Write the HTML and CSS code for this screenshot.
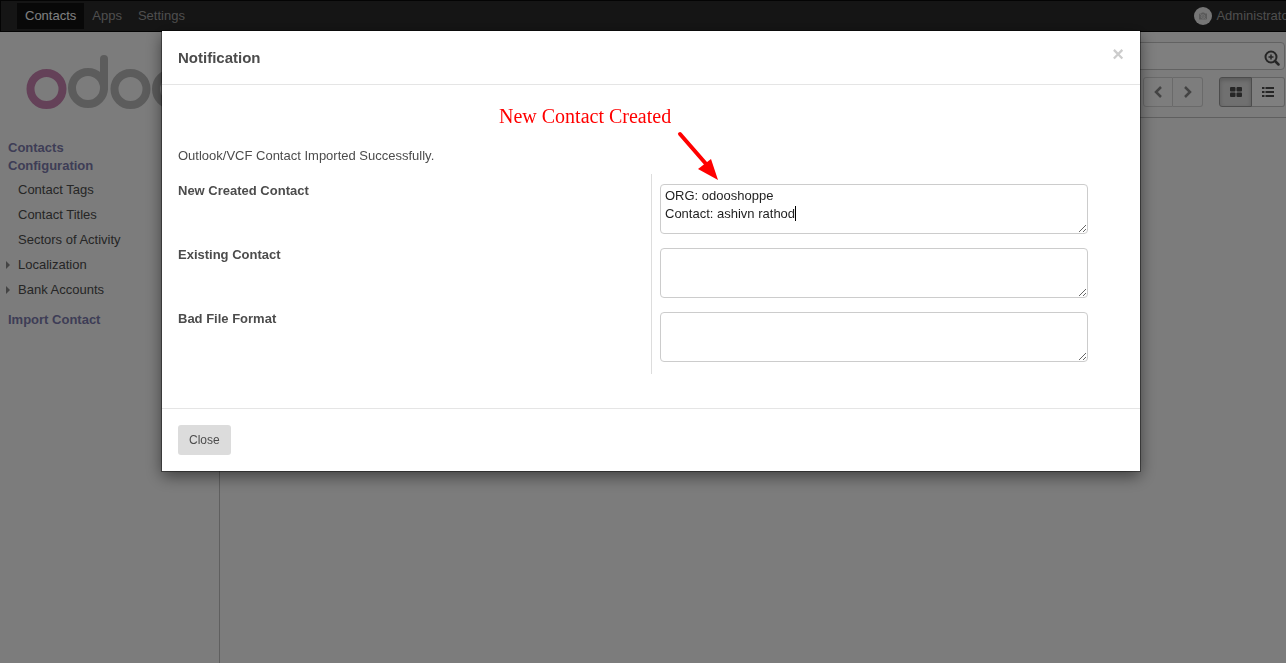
FILE: index.html
```
<!DOCTYPE html>
<html lang="en">
<head>
<meta charset="utf-8">
<title>Contacts - Odoo</title>
<link rel="stylesheet" href="styles.css">
</head>
<body>
<div class="app">
  <nav class="navbar">
    <a class="nav-item active" href="#">Contacts</a>
    <a class="nav-item" href="#">Apps</a>
    <a class="nav-item" href="#">Settings</a>
    <a class="user" href="#">
      <svg class="avatar" viewBox="0 0 18 18"><circle cx="9" cy="9" r="9" fill="#ececec"/><path d="M5 6.500h2l1-1h2l1 1h2v6H5z" fill="#b4b4b4"/><circle cx="9" cy="9.500" r="1.800" fill="none" stroke="#e4e4e4"/><path d="M5 6l8 7" stroke="#ddd"/></svg>
      <span>Administrator</span>
    </a>
  </nav>
  <div class="body">
    <aside class="sidebar">
      <svg class="logo" viewBox="0 0 188 60">
        <g fill="none" stroke-width="8">
          <circle cx="20.500" cy="36" r="16" stroke="#c983b1"/>
          <g stroke="#b8b8b8"><circle cx="62" cy="35" r="16"/><path d="M78 35V6" stroke-linecap="round"/><circle cx="104.500" cy="36" r="16"/><circle cx="146" cy="36" r="16"/></g>
        </g>
      </svg>
      <h2 class="section">Contacts</h2>
      <h2 class="section">Configuration</h2>
      <ul class="menu">
        <li><a href="#">Contact Tags</a></li>
        <li><a href="#">Contact Titles</a></li>
        <li><a href="#">Sectors of Activity</a></li>
        <li class="parent"><a href="#">Localization</a></li>
        <li class="parent"><a href="#">Bank Accounts</a></li>
      </ul>
      <h2 class="section">Import Contact</h2>
    </aside>
    <main class="content">
      <div class="control-panel">
        <div class="search">
          <input type="text" aria-label="Search">
          <svg class="search-icon" viewBox="0 0 16 16" fill="none" stroke="#4c4c4c"><circle cx="7" cy="7" r="5.500" stroke-width="2"/><path d="M11 11l3.500 3.500" stroke-width="2.500" stroke-linecap="round"/><path d="M4.500 7h5M7 4.500v5" stroke-width="1.500"/></svg>
        </div>
        <div class="buttons">
          <div class="group">
            <button class="pager" aria-label="Previous"><svg viewBox="0 0 12 12"><path d="M9 1L4 6l5 5" fill="none" stroke="#888" stroke-width="2.500"/></svg></button>
            <button class="pager" aria-label="Next"><svg viewBox="0 0 12 12"><path d="M3 1l5 5-5 5" fill="none" stroke="#888" stroke-width="2.500"/></svg></button>
          </div>
          <div class="group">
            <button class="view on" aria-label="Kanban view"><svg viewBox="0 0 12 12" fill="#4c4c4c"><rect y="1" width="5.500" height="4.500" rx="1"/><rect x="6.500" y="1" width="5.500" height="4.500" rx="1"/><rect y="6.500" width="5.500" height="4.500" rx="1"/><rect x="6.500" y="6.500" width="5.500" height="4.500" rx="1"/></svg></button>
            <button class="view" aria-label="List view"><svg viewBox="0 0 12 12" fill="#4c4c4c"><path d="M0 1h2.500v2H0zM3.500 1H12v2H3.500zM0 5h2.500v2H0zM3.500 5H12v2H3.500zM0 9h2.500v2H0zM3.500 9H12v2H3.500z"/></svg></button>
          </div>
        </div>
      </div>
    </main>
  </div>
</div>
<div class="backdrop">
  <section class="modal" role="dialog" aria-labelledby="title">
    <header class="modal-header">
      <h1 id="title">Notification</h1>
      <button class="dismiss" aria-label="Dismiss">×</button>
    </header>
    <div class="modal-body">
      <div class="note">New Contact Created
        <svg class="arrow" viewBox="0 0 44 52"><path d="M4 5l27 31" stroke="#f00" stroke-width="4" stroke-linecap="round"/><path d="M42 51L22 40l13-10z" fill="#f00"/></svg>
      </div>
      <p class="message">Outlook/VCF Contact Imported Successfully.</p>
      <div class="form">
        <div class="row">
          <label for="created">New Created Contact</label>
          <div class="field"><textarea id="created">ORG: odooshoppe
Contact: ashivn rathod</textarea><span class="caret"></span></div>
        </div>
        <div class="row">
          <label for="existing">Existing Contact</label>
          <div class="field"><textarea id="existing"></textarea></div>
        </div>
        <div class="row">
          <label for="bad">Bad File Format</label>
          <div class="field"><textarea id="bad"></textarea></div>
        </div>
      </div>
    </div>
    <footer class="modal-footer"><button class="close">Close</button></footer>
  </section>
</div>
</body>
</html>
```
FILE: styles.css
```
* { box-sizing: border-box; }
body {
  margin: 0;
  overflow: hidden;
  font: 13px/18px "Liberation Sans", Arial, sans-serif;
  color: #4c4c4c;
}
a { color: inherit; text-decoration: none; }
button { font: inherit; color: inherit; cursor: pointer; }

.app { display: flex; flex-direction: column; min-height: 100vh; }
.navbar {
  display: flex;
  align-items: center;
  height: 32px;
  padding-left: 16px;
  overflow: hidden;
  background: #2b2b2b;
  border: 1px solid #080808;
  border-right: 0;
  color: #9d9d9d;
}
.nav-item { padding: 4px 8px; }
.nav-item.active { background: #101010; color: #fff; }
.user {
  display: flex;
  align-items: center;
  gap: 4px;
  margin-left: auto;
  margin-right: -7px;
}
.avatar { width: 18px; height: 18px; }

.body { display: flex; flex: 1; }
.sidebar {
  width: 220px;
  background: #f8f8f8;
  border-right: 1px solid #bfbfbf;
}
.logo { display: block; width: 188px; height: 60px; margin: 21px 0 26px 26px; }
.section {
  margin: 0;
  padding-left: 8px;
  font-size: 13px;
  line-height: 18px;
  color: #7c7bad;
}
.menu { margin: 2px 0 9px; padding: 0; list-style: none; }
.menu li {
  display: flex;
  align-items: center;
  height: 25px;
  padding-left: 18px;
}
.menu .parent { gap: 8px; padding-left: 6px; }
.parent::before {
  content: "";
  border: 4px solid transparent;
  border-left-color: #888;
  border-right: 0;
}

.content { flex: 1; background: #f8f8f8; }
.control-panel {
  display: flex;
  flex-direction: column;
  align-items: flex-end;
  gap: 7px;
  padding: 10px 1px 10px;
  border-bottom: 1px solid #bfbfbf;
}
.search {
  display: flex;
  align-items: center;
  width: 50%;
  height: 28px;
  padding-right: 4px;
  border: 1px solid #c4c4c4;
  border-radius: 4px;
  background: #fff;
}
.search input { flex: 1; border: 0; background: none; }
.search-icon { width: 16px; height: 16px; margin-top: 3px; }
.buttons { display: flex; gap: 16px; }
.group { display: flex; }
.group button {
  display: flex;
  align-items: center;
  justify-content: center;
  height: 30px;
  padding: 0 0 1px;
  background: #fff;
  border: 1px solid #c4c4c4;
}
.group button:first-child { border-radius: 3px 0 0 3px; }
.group button:last-child { border-radius: 0 3px 3px 0; border-left: 0; }
.group svg { width: 12px; height: 12px; }
.group .pager { width: 30px; background: #fafafa; border-color: #d4d4d4; }
.view { width: 33px; }
.group .on { background: #e0e0e0; border-color: #999; box-shadow: inset 0 2px 4px rgba(0, 0, 0, .2); }

.backdrop {
  position: fixed;
  inset: 0;
  padding: 31px 146px 0 162px;
  background: rgba(0, 0, 0, .5);
}
.modal {
  background: #fff;
  box-shadow: 0 0 0 1px rgba(0, 0, 0, .4), 0 5px 15px rgba(0, 0, 0, .5);
}
.modal-header {
  display: flex;
  align-items: center;
  justify-content: space-between;
  height: 54px;
  padding: 0 16px;
  border-bottom: 1px solid #e5e5e5;
}
.modal-header h1 { margin: 0; font-size: 15px; line-height: 20px; }
.dismiss {
  padding: 0 0 8px;
  background: none;
  border: 0;
  font-size: 20px;
  line-height: 20px;
  font-weight: bold;
  color: #ccc;
}
.modal-body { padding: 19px 16px 34px; }
.note {
  position: relative;
  width: max-content;
  margin-left: 321px;
  font: 20px/24px "Liberation Serif", "Times New Roman", serif;
  color: #f00;
}
.arrow { position: absolute; left: 100%; top: 25px; width: 44px; height: 52px; margin-left: 5px; z-index: 1; }
.message { margin: 19px 0 9px; }
.form { padding-bottom: 2px; background: linear-gradient(#ddd, #ddd) 50% 0 / 1px 100% no-repeat; }
.row { display: grid; grid-template-columns: 1fr 1fr; height: 64px; }
.form .row:first-child { height: 74px; padding-top: 10px; }
.form .row:last-child { height: 60px; }
label { font-weight: bold; line-height: 14px; }
.field { position: relative; padding: 0 36px 0 9px; }
textarea {
  display: block;
  width: 100%;
  height: 50px;
  padding: 2px 4px;
  border: 1px solid #ccc;
  border-radius: 4px;
  font: inherit;
  color: #1f1f1f;
}
.caret { position: absolute; left: 144px; top: 22px; width: 1px; height: 15px; background: #000; }
.modal-footer { padding: 16px; border-top: 1px solid #e5e5e5; }
.close {
  display: block;
  height: 30px;
  padding: 0 11px;
  border: 0;
  border-radius: 3px;
  background: #dcdcdc;
  font-size: 12px;
}
```
